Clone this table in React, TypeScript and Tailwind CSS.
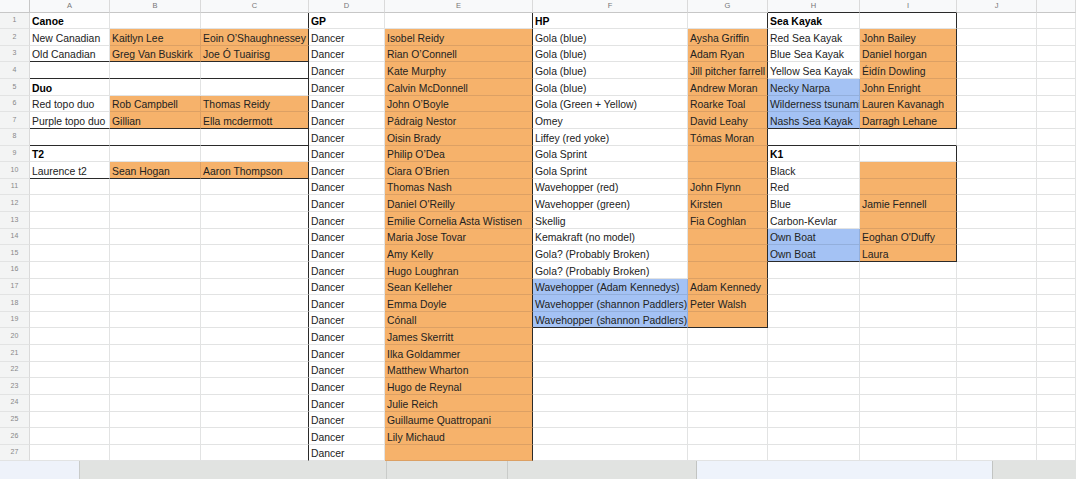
import { Fragment } from "react";
import clsx from "clsx";

type Fill = "o" | "b" | undefined;

interface CellData {
  text?: string;
  fill?: Fill;
  bold?: boolean;
}

const COLS = ["A", "B", "C", "D", "E", "F", "G", "H", "I", "J", ""];

// row number -> column index -> cell
const sheet: Record<number, Record<number, CellData>> = {
  1: { 0: { text: "Canoe", bold: true }, 3: { text: "GP", bold: true }, 5: { text: "HP", bold: true }, 7: { text: "Sea Kayak", bold: true } },
  2: { 0: { text: "New Canadian" }, 1: { text: "Kaitlyn Lee", fill: "o" }, 2: { text: "Eoin O’Shaughnessey", fill: "o" }, 4: { text: "Isobel Reidy", fill: "o" }, 5: { text: "Gola (blue)" }, 6: { text: "Aysha Griffin", fill: "o" }, 7: { text: "Red Sea Kayak" }, 8: { text: "John Bailey", fill: "o" } },
  3: { 0: { text: "Old Canadian" }, 1: { text: "Greg Van Buskirk", fill: "o" }, 2: { text: "Joe Ó Tuairisg", fill: "o" }, 4: { text: "Rian O’Connell", fill: "o" }, 5: { text: "Gola (blue)" }, 6: { text: "Adam Ryan", fill: "o" }, 7: { text: "Blue Sea Kayak" }, 8: { text: "Daniel horgan", fill: "o" } },
  4: { 4: { text: "Kate Murphy", fill: "o" }, 5: { text: "Gola (blue)" }, 6: { text: "Jill pitcher farrell", fill: "o" }, 7: { text: "Yellow Sea Kayak" }, 8: { text: "Éidín Dowling", fill: "o" } },
  5: { 0: { text: "Duo", bold: true }, 4: { text: "Calvin McDonnell", fill: "o" }, 5: { text: "Gola (blue)" }, 6: { text: "Andrew Moran", fill: "o" }, 7: { text: "Necky Narpa", fill: "b" }, 8: { text: "John Enright", fill: "o" } },
  6: { 0: { text: "Red topo duo" }, 1: { text: "Rob Campbell", fill: "o" }, 2: { text: "Thomas Reidy", fill: "o" }, 4: { text: "John O’Boyle", fill: "o" }, 5: { text: "Gola (Green + Yellow)" }, 6: { text: "Roarke Toal", fill: "o" }, 7: { text: "Wilderness tsunami", fill: "b" }, 8: { text: "Lauren Kavanagh", fill: "o" } },
  7: { 0: { text: "Purple topo duo" }, 1: { text: "Gillian", fill: "o" }, 2: { text: "Ella mcdermott", fill: "o" }, 4: { text: "Pádraig Nestor", fill: "o" }, 5: { text: "Omey" }, 6: { text: "David Leahy", fill: "o" }, 7: { text: "Nashs Sea Kayak", fill: "b" }, 8: { text: "Darragh Lehane", fill: "o" } },
  8: { 4: { text: "Oisin Brady", fill: "o" }, 5: { text: "Liffey (red yoke)" }, 6: { text: "Tómas Moran", fill: "o" } },
  9: { 0: { text: "T2", bold: true }, 4: { text: "Philip O’Dea", fill: "o" }, 5: { text: "Gola Sprint" }, 6: { fill: "o" }, 7: { text: "K1", bold: true } },
  10: { 0: { text: "Laurence t2" }, 1: { text: "Sean Hogan", fill: "o" }, 2: { text: "Aaron Thompson", fill: "o" }, 4: { text: "Ciara O’Brien", fill: "o" }, 5: { text: "Gola Sprint" }, 6: { fill: "o" }, 7: { text: "Black" }, 8: { fill: "o" } },
  11: { 4: { text: "Thomas Nash", fill: "o" }, 5: { text: "Wavehopper (red)" }, 6: { text: "John Flynn", fill: "o" }, 7: { text: "Red" }, 8: { fill: "o" } },
  12: { 4: { text: "Daniel O'Reilly", fill: "o" }, 5: { text: "Wavehopper (green)" }, 6: { text: "Kirsten", fill: "o" }, 7: { text: "Blue" }, 8: { text: "Jamie Fennell", fill: "o" } },
  13: { 4: { text: "Emilie Cornelia Asta Wistisen", fill: "o" }, 5: { text: "Skellig" }, 6: { text: "Fia Coghlan", fill: "o" }, 7: { text: "Carbon-Kevlar" }, 8: { fill: "o" } },
  14: { 4: { text: "Maria Jose Tovar", fill: "o" }, 5: { text: "Kemakraft (no model)" }, 6: { fill: "o" }, 7: { text: "Own Boat", fill: "b" }, 8: { text: "Eoghan O'Duffy", fill: "o" } },
  15: { 4: { text: "Amy Kelly", fill: "o" }, 5: { text: "Gola? (Probably Broken)" }, 6: { fill: "o" }, 7: { text: "Own Boat", fill: "b" }, 8: { text: "Laura", fill: "o" } },
  16: { 4: { text: "Hugo Loughran", fill: "o" }, 5: { text: "Gola? (Probably Broken)" }, 6: { fill: "o" } },
  17: { 4: { text: "Sean Kelleher", fill: "o" }, 5: { text: "Wavehopper (Adam Kennedys)", fill: "b" }, 6: { text: "Adam Kennedy", fill: "o" } },
  18: { 4: { text: "Emma Doyle", fill: "o" }, 5: { text: "Wavehopper (shannon Paddlers)", fill: "b" }, 6: { text: "Peter Walsh", fill: "o" } },
  19: { 4: { text: "Cónall", fill: "o" }, 5: { text: "Wavehopper (shannon Paddlers)", fill: "b" }, 6: { fill: "o" } },
  20: { 4: { text: "James Skerritt", fill: "o" } },
  21: { 4: { text: "Ilka Goldammer", fill: "o" } },
  22: { 4: { text: "Matthew Wharton", fill: "o" } },
  23: { 4: { text: "Hugo de Reynal", fill: "o" } },
  24: { 4: { text: "Julie Reich", fill: "o" } },
  25: { 4: { text: "Guillaume Quattropani", fill: "o" } },
  26: { 4: { text: "Lily Michaud", fill: "o" } },
  27: { 4: { fill: "o" } },
};

const ROWS = Array.from({ length: 27 }, (_, i) => i + 1);

// heavy borders drawn on the right / bottom edge of a cell
const darkRight = (row: number, col: number) =>
  col === 2 ||
  col === 4 ||
  (col === 6 && row <= 19) ||
  (col === 8 && ((row >= 1 && row <= 7) || (row >= 9 && row <= 15)));

const darkBottom = (row: number, col: number) =>
  (col <= 2 && [3, 4, 7, 8, 10].includes(row)) ||
  ((col === 7 || col === 8) && [0, 7, 8, 15].includes(row)) ||
  ((col === 5 || col === 6) && row === 19);

const Cell = ({ row, col }: { row: number; col: number }) => {
  const data = sheet[row]?.[col] ?? (col === 3 && row >= 2 ? { text: "Dancer" } : {});
  const r = darkRight(row, col);
  const b = darkBottom(row, col);
  return (
    <div
      className={clsx(
        "flex items-end overflow-hidden whitespace-nowrap border-r border-b pl-[2px] text-[10.4px] leading-[12px] text-[#222]",
        data.fill === "o" && "bg-[#f6b26b]",
        data.fill === "b" && "bg-[#a4c2f4]",
        r
          ? "border-r-[#2a2a2a]"
          : data.fill === "o"
            ? "border-r-[#dca064]"
            : data.fill === "b"
              ? "border-r-[#93afdc]"
              : "border-r-[#e2e3e3]",
        b
          ? "border-b-[#2a2a2a]"
          : data.fill === "o"
            ? "border-b-[#dca064]"
            : data.fill === "b"
              ? "border-b-[#93afdc]"
              : "border-b-[#e2e3e3]",
        data.bold && "font-bold text-black",
      )}
    >
      {data.text}
    </div>
  );
};

export default function App() {
  return (
    <div
      className="flex h-[479px] w-[1076px] flex-col overflow-hidden bg-white"
      style={{ fontFamily: '"Liberation Sans", Arial, sans-serif' }}
    >
      <div className="grid shrink-0 grid-cols-[30px_80px_91px_108px_76px_148px_155px_80px_92px_97px_80px_1fr] grid-rows-[12.5px_repeat(27,16.64px)]">
        <div className="border-r border-b border-[#c7c7c7] bg-[#f8f9fa]" />
        {COLS.map((c, i) => (
          <div
            key={"h" + i}
            className={clsx(
              "flex items-center justify-center border-r border-b border-r-[#dadada] bg-[#f8f9fa] text-[7.5px] text-[#777]",
              darkBottom(0, i) ? "border-b-[#2a2a2a]" : "border-b-[#c7c7c7]",
            )}
          >
            {c}
          </div>
        ))}
        {ROWS.map((r) => (
          <Fragment key={r}>
            <div className="flex items-center justify-center border-r border-b border-r-[#dadada] border-b-[#e2e3e3] bg-[#f3f4f4] text-[7px] text-[#888]">
              {r}
            </div>
            {COLS.map((_, c) => (
              <Cell key={c} row={r} col={c} />
            ))}
          </Fragment>
        ))}
      </div>

      <div className="flex flex-1">
        <div className="w-[79px] bg-[#eef2fa]" />
        <div className="w-[307px] border-l border-[#c9cbc9] bg-[#e1e3e1]" />
        <div className="w-[121px] border-l border-[#c9cbc9] bg-[#e1e3e1]" />
        <div className="w-[189px] border-l border-[#c9cbc9] bg-[#e1e3e1]" />
        <div className="w-[297px] border-x border-[#c2c4c2] bg-[#eef3fb]" />
        <div className="flex-1 bg-[#e1e3e1]" />
      </div>
    </div>
  );
}
